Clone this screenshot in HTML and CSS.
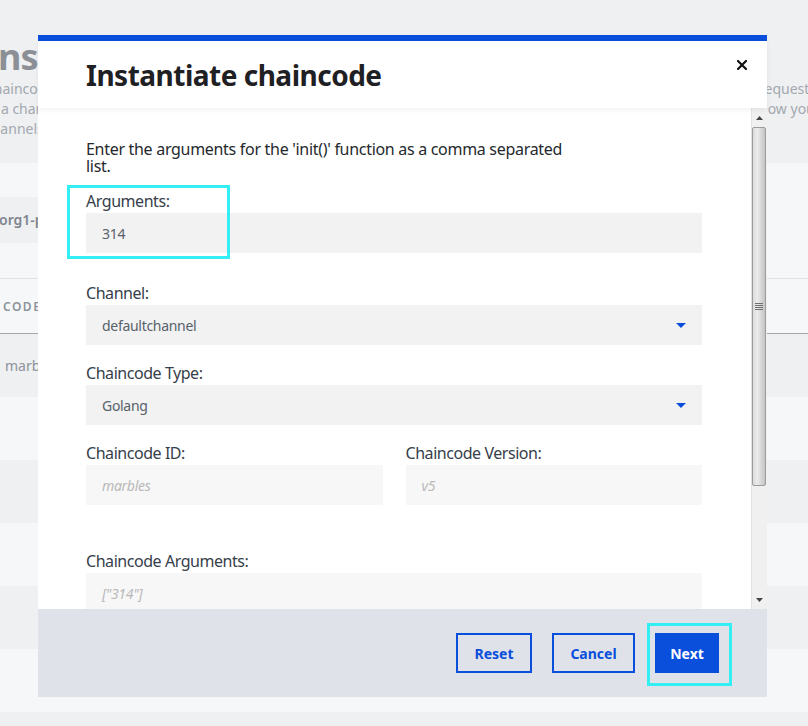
FILE: index.html
```html
<!DOCTYPE html>
<html lang="en">
<head>
<meta charset="utf-8">
<title>Instantiate chaincode</title>
<link rel="stylesheet" href="styles.css">
</head>
<body>
<div class="page">
  <header class="page-head">
    <h1 class="page-title">Instantiate chaincode</h1>
    <div class="page-desc">
      <p class="desc-line"><span class="desc-left">Chaincode must be instantiated on a channel before it can be invoked by applications and clients that send a</span><span class="desc-right">request to the</span></p>
      <p class="desc-line"><span class="desc-left">in a channel by a peer that has the chaincode installed. Choose the peer and the channel to see</span><span class="desc-right">how you</span></p>
      <p class="desc-line"><span class="desc-left">channels</span></p>
    </div>
  </header>
  <section class="peer-area">
    <div class="peer-box">org1-peer1</div>
  </section>
  <section class="table">
    <div class="thead"><span class="th">CODE</span></div>
    <div class="trow dark"><span class="td">marbles</span></div>
    <div class="trow"></div>
    <div class="trow dark"></div>
    <div class="trow"></div>
    <div class="trow dark"></div>
    <div class="trow"></div>
  </section>
</div>

<div class="modal">
  <div class="modal-head">
    <h2 class="modal-title">Instantiate chaincode</h2>
    <button class="close" aria-label="Close">
      <svg width="10" height="10" viewBox="0 0 10 10"><path d="M1 1L9 9M9 1L1 9" stroke="#111" stroke-width="2.2" stroke-linecap="square"/></svg>
    </button>
  </div>
  <div class="modal-body">
    <div class="content">
      <p class="intro">Enter the arguments for the 'init()' function as a comma separated list.</p>

      <div class="field f-args">
        <label class="label">Arguments:</label>
        <div class="input">314</div>
        <span class="mark mark-args"></span>
      </div>

      <div class="field f-channel">
        <label class="label">Channel:</label>
        <div class="input select">defaultchannel
          <svg class="caret" width="10" height="5" viewBox="0 0 10 5"><path d="M0 0H10L5 5Z" fill="#0a4edc"/></svg>
        </div>
      </div>

      <div class="field f-type">
        <label class="label">Chaincode Type:</label>
        <div class="input select">Golang
          <svg class="caret" width="10" height="5" viewBox="0 0 10 5"><path d="M0 0H10L5 5Z" fill="#0a4edc"/></svg>
        </div>
      </div>

      <div class="pair">
        <div class="field">
          <label class="label">Chaincode ID:</label>
          <div class="input disabled">marbles</div>
        </div>
        <div class="field">
          <label class="label">Chaincode Version:</label>
          <div class="input disabled">v5</div>
        </div>
      </div>

      <div class="field f-ccargs">
        <label class="label">Chaincode Arguments:</label>
        <div class="input disabled">["314"]</div>
      </div>
    </div>
    <div class="scrollbar">
      <div class="sb-btn"><svg width="7" height="4" viewBox="0 0 7 4"><path d="M0 4L3.5 0L7 4Z" fill="#444"/></svg></div>
      <div class="sb-thumb"><span class="grip"></span></div>
      <div class="sb-track"></div>
      <div class="sb-btn"><svg width="7" height="4" viewBox="0 0 7 4"><path d="M0 0H7L3.5 4Z" fill="#444"/></svg></div>
    </div>
  </div>
  <div class="modal-foot">
    <button class="btn btn-ghost btn-reset">Reset</button>
    <button class="btn btn-ghost btn-cancel">Cancel</button>
    <div class="next-wrap">
      <button class="btn btn-primary btn-next">Next</button>
      <span class="mark mark-next"></span>
    </div>
  </div>
</div>
</body>
</html>
```

FILE: styles.css
```css
* { box-sizing: border-box; }
html, body { margin: 0; padding: 0; }
body {
  width: 808px;
  height: 726px;
  overflow: hidden;
  position: relative;
  background: #eff0f2;
  font-family: "Noto Sans", "Liberation Sans", sans-serif;
}

/* background page */
.page { margin-left: -15px; width: 823px; }
.page-head { height: 163px; background: #eff0f2; padding-top: 36px; }
.page-title {
  margin: 0;
  font-size: 36px;
  font-weight: 700;
  line-height: 42px;
  letter-spacing: -1px;
  color: #8c9096;
  white-space: nowrap;
}
.page-desc { margin-top: 1px; font-size: 14px; line-height: 20px; color: #a2a8af; }
.desc-line { margin: 0; display: flex; white-space: nowrap; height: 20px; }
.desc-left { width: 774px; overflow: hidden; flex: none; }
.desc-right { flex: none; }

.peer-area { height: 115px; background: #f6f7f9; padding-top: 34px; }
.peer-box {
  width: 320px;
  height: 46px;
  background: #eff0f2;
  padding-left: 14px;
  font-size: 14px;
  font-weight: 600;
  line-height: 46px;
  color: #7f868e;
}

.table { background: #f6f7f9; }
.thead {
  height: 56px;
  border-top: 1px solid #dfe1e4;
  border-bottom: 1px solid #a3a6aa;
  display: flex;
  align-items: center;
  padding-left: 18px;
}
.th { font-size: 12px; font-weight: 600; letter-spacing: 1.5px; color: #8d939a; }
.trow { height: 63px; display: flex; align-items: center; padding-left: 20px; }
.trow.dark { background: #eff0f2; }
.td { font-size: 14px; color: #8d939a; }

/* modal */
.modal {
  position: absolute;
  top: 35px;
  left: 38px;
  width: 729px;
  height: 662px;
  background: #fff;
  border-top: 6px solid #0a4edc;
  display: flex;
  flex-direction: column;
}
.modal-head {
  height: 67px;
  flex: none;
  display: flex;
  justify-content: space-between;
  align-items: center;
  padding: 0 20px 0 48px;
  position: relative;
  z-index: 1;
  background: #fff;
  box-shadow: 0 2px 5px rgba(0, 0, 0, 0.06);
}
.modal-title {
  margin: 0;
  font-size: 28px;
  font-weight: 700;
  color: #1f2023;
  line-height: 34px;
  letter-spacing: -0.5px;
}
.close {
  align-self: flex-start;
  margin-top: 19px;
  width: 10px;
  height: 10px;
  padding: 0;
  border: 0;
  background: none;
  display: block;
}
.close svg { display: block; }

.modal-body { height: 501px; flex: none; display: flex; }
.content {
  flex: 1;
  overflow: hidden;
  padding: 33px 49px 0 48px;
}
.intro {
  margin: 0;
  max-width: 480px;
  font-size: 16px;
  line-height: 17px;
  letter-spacing: -0.3px;
  color: #25292d;
}
.field { position: relative; }
.label {
  display: block;
  font-size: 16px;
  line-height: 18px;
  letter-spacing: -0.45px;
  color: #36404a;
  margin-bottom: 3px;
}
.input {
  height: 40px;
  background: #f2f2f2;
  padding: 0 16px;
  display: flex;
  align-items: center;
  font-size: 14px;
  letter-spacing: -0.3px;
  color: #58616a;
}
.select { justify-content: space-between; }
.caret { display: block; }
.disabled { background: #f7f7f7; color: #b9b9b9; font-style: italic; }

.f-args { margin-top: 17px; }
.f-channel { margin-top: 31px; }
.f-type { margin-top: 19px; }
.pair { margin-top: 19px; display: grid; grid-template-columns: 1fr 1fr; gap: 23px; }
.f-ccargs { margin-top: 47px; }

.mark {
  position: absolute;
  border: 3px solid #33eef2;
  pointer-events: none;
}
.mark-args { left: -19px; top: -7px; width: 163px; height: 74px; }

/* scrollbar */
.scrollbar {
  width: 16px;
  flex: none;
  background: #f0f0f0;
  border-left: 1px solid #e2e2e2;
  display: flex;
  flex-direction: column;
}
.sb-btn { height: 19px; flex: none; display: flex; align-items: center; justify-content: center; }
.sb-btn svg { display: block; }
.sb-thumb {
  height: 359px;
  flex: none;
  margin: 0 1px 0 0;
  border: 1px solid #9c9c9c;
  border-radius: 2px;
  background: linear-gradient(to right, #dadada 0%, #ececec 35%, #d6d6d6 70%, #c4c4c4 100%);
  display: flex;
  align-items: center;
  justify-content: center;
}
.grip {
  width: 8px;
  height: 8px;
  background: repeating-linear-gradient(to bottom, #6f6f6f 0 1px, transparent 1px 2px);
}
.sb-track { flex: 1; }

/* footer */
.modal-foot {
  height: 88px;
  flex: none;
  background: #dfe3e9;
  display: flex;
  justify-content: flex-end;
  align-items: center;
  gap: 20px;
  padding-right: 48px;
}
.btn {
  height: 40px;
  padding: 0;
  font-family: inherit;
  font-size: 14px;
  font-weight: 700;
  border: 2px solid #0a4edc;
  cursor: pointer;
}
.btn-reset { width: 76px; }
.btn-cancel { width: 83px; }
.btn-next { width: 64px; }
.btn-ghost { background: transparent; color: #0a4edc; }
.btn-primary { background: #0a4edc; color: #fff; }
.next-wrap { position: relative; display: flex; }
.mark-next { left: -8px; top: -10px; width: 85px; height: 63px; }
```
